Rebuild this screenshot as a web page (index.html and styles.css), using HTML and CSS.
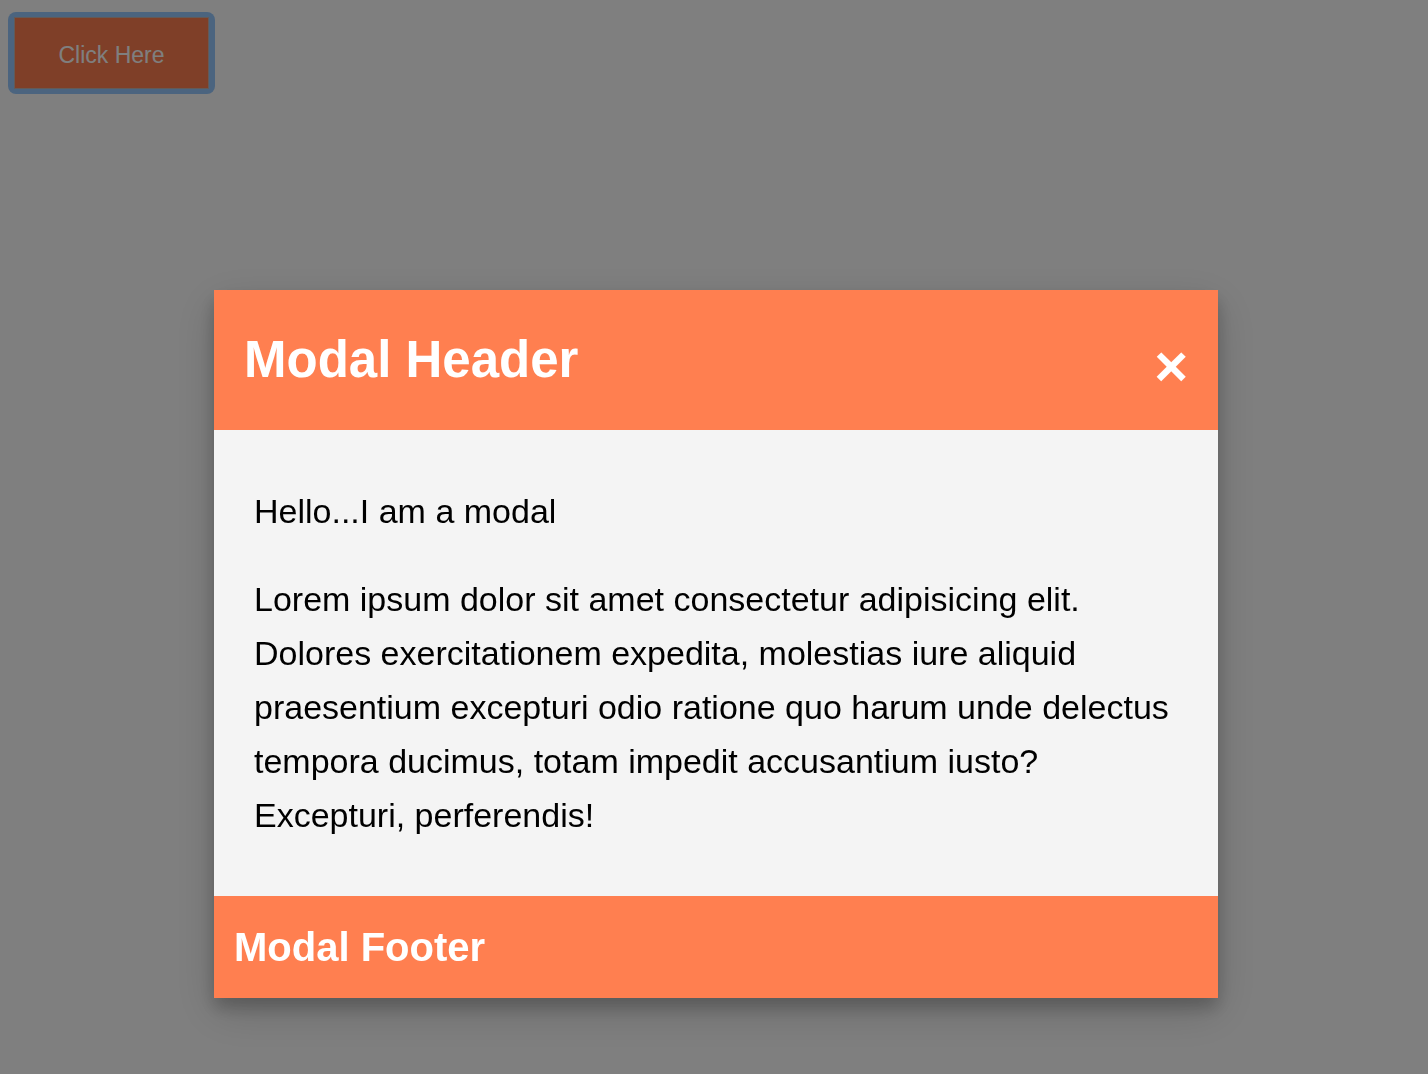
FILE: index.html
```html
<!DOCTYPE html>
<html>
<head>
<meta charset="utf-8">
<title>Modal</title>
<link rel="stylesheet" href="styles.css">
</head>
<body>
<div class="page">
  <span class="focus-ring"><button class="button">Click Here</button></span>
</div>
<div class="modal">
  <div class="modal-content">
    <div class="modal-header">
      <h2>Modal Header</h2>
      <span class="close-btn">&times;</span>
    </div>
    <div class="modal-body">
      <p>Hello...I am a modal</p>
      <p>Lorem ipsum dolor sit amet consectetur adipisicing elit. Dolores exercitationem expedita, molestias iure aliquid praesentium excepturi odio ratione quo harum unde delectus tempora ducimus, totam impedit accusantium iusto? Excepturi, perferendis!</p>
    </div>
    <div class="modal-footer">
      <h3>Modal Footer</h3>
    </div>
  </div>
</div>
</body>
</html>
```

FILE: styles.css
```css
html, body {
  margin: 0;
  padding: 0;
  height: 100%;
  background: #ffffff;
}

body {
  font-family: "Liberation Sans", Arial, Helvetica, sans-serif;
  color: #000;
}

.page {
  padding: 12px 0 0 8px;
}

.focus-ring {
  display: inline-block;
  padding: 5px 6px;
  border-radius: 8px;
  background: rgb(150, 200, 255);
  line-height: 0;
}

.button {
  display: block;
  width: 195px;
  height: 72px;
  margin: 0;
  padding: 3px 0 0;
  border: 1px solid rgb(200, 180, 175);
  background: coral;
  color: #ffffff;
  font-family: "Liberation Sans", Arial, Helvetica, sans-serif;
  font-size: 23px;
  line-height: 26px;
}

.modal {
  position: fixed;
  left: 0;
  top: 0;
  width: 100%;
  height: 100%;
  background: rgba(0, 0, 0, 0.5);
  padding-left: 4px;
  box-sizing: border-box;
  overflow: hidden;
}

.modal-content {
  width: 1004px;
  margin: 290px auto 0;
  background: #f4f4f4;
  box-shadow: 0 10px 16px 0 rgba(0, 0, 0, 0.2), 0 14px 40px 0 rgba(0, 0, 0, 0.17);
}

.modal-header {
  background: coral;
  color: #fff;
  padding: 30px 30px;
  display: flex;
  justify-content: space-between;
  align-items: flex-start;
}

.modal-header h2 {
  margin: 0;
  font-size: 51px;
  line-height: 80px;
  font-weight: bold;
}

.close-btn {
  font-size: 58px;
  font-weight: bold;
  line-height: 68px;
  margin-top: 12px;
  color: #fff;
}

.modal-body {
  padding: 20px 40px;
  font-size: 34px;
  line-height: 54px;
}

.modal-body p {
  margin: 34px 0;
}

.modal-footer {
  background: coral;
  color: #fff;
  padding: 20px 20px;
}

.modal-footer h3 {
  margin: 0;
  font-size: 40px;
  line-height: 62px;
  font-weight: bold;
}
```
